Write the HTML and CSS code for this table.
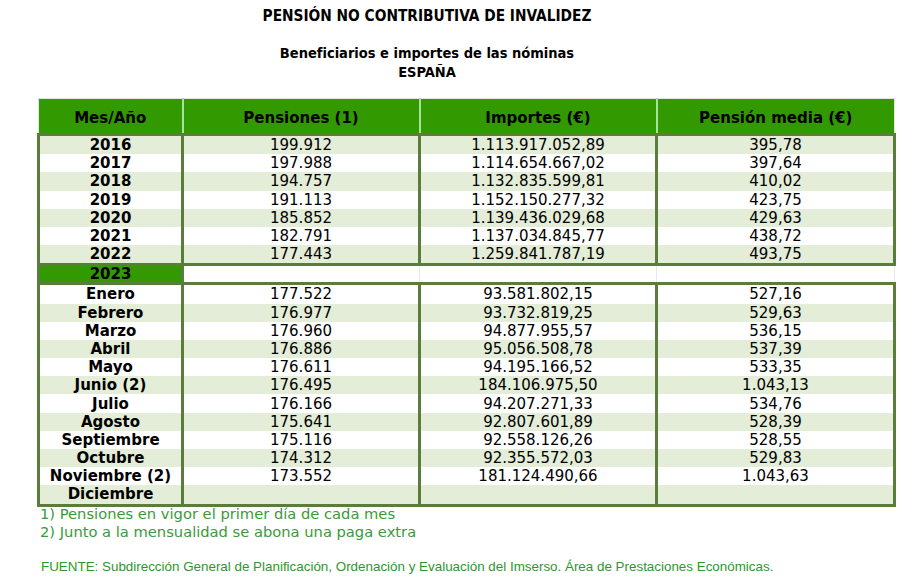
FILE: index.html
```html
<!DOCTYPE html>
<html lang="es">
<head>
<meta charset="utf-8">
<title>Pensión no contributiva de invalidez</title>
<link rel="stylesheet" href="styles.css">
</head>
<body>
<div class="page">
  <div class="titles">
    <h1 class="title">PENSIÓN NO CONTRIBUTIVA DE INVALIDEZ</h1>
    <h2 class="subtitle">Beneficiarios e importes de las nóminas<br>ESPAÑA</h2>
  </div>
  <table class="data">
    <colgroup>
      <col class="c1"><col class="c2"><col class="c3"><col class="c4">
    </colgroup>
    <thead>
      <tr><th>Mes/Año</th><th>Pensiones (1)</th><th>Importes (€)</th><th>Pensión media (€)</th></tr>
    </thead>
    <tbody class="block">
      <tr class="alt"><td class="lbl">2016</td><td>199.912</td><td>1.113.917.052,89</td><td>395,78</td></tr>
      <tr><td class="lbl">2017</td><td>197.988</td><td>1.114.654.667,02</td><td>397,64</td></tr>
      <tr class="alt"><td class="lbl">2018</td><td>194.757</td><td>1.132.835.599,81</td><td>410,02</td></tr>
      <tr><td class="lbl">2019</td><td>191.113</td><td>1.152.150.277,32</td><td>423,75</td></tr>
      <tr class="alt"><td class="lbl">2020</td><td>185.852</td><td>1.139.436.029,68</td><td>429,63</td></tr>
      <tr><td class="lbl">2021</td><td>182.791</td><td>1.137.034.845,77</td><td>438,72</td></tr>
      <tr class="alt"><td class="lbl">2022</td><td>177.443</td><td>1.259.841.787,19</td><td>493,75</td></tr>
    </tbody>
    <tbody class="sep">
      <tr><td class="lbl year">2023</td><td></td><td></td><td></td></tr>
    </tbody>
    <tbody class="block">
      <tr><td class="lbl">Enero</td><td>177.522</td><td>93.581.802,15</td><td>527,16</td></tr>
      <tr class="alt"><td class="lbl">Febrero</td><td>176.977</td><td>93.732.819,25</td><td>529,63</td></tr>
      <tr><td class="lbl">Marzo</td><td>176.960</td><td>94.877.955,57</td><td>536,15</td></tr>
      <tr class="alt"><td class="lbl">Abril</td><td>176.886</td><td>95.056.508,78</td><td>537,39</td></tr>
      <tr><td class="lbl">Mayo</td><td>176.611</td><td>94.195.166,52</td><td>533,35</td></tr>
      <tr class="alt"><td class="lbl">Junio (2)</td><td>176.495</td><td>184.106.975,50</td><td>1.043,13</td></tr>
      <tr><td class="lbl">Julio</td><td>176.166</td><td>94.207.271,33</td><td>534,76</td></tr>
      <tr class="alt"><td class="lbl">Agosto</td><td>175.641</td><td>92.807.601,89</td><td>528,39</td></tr>
      <tr><td class="lbl">Septiembre</td><td>175.116</td><td>92.558.126,26</td><td>528,55</td></tr>
      <tr class="alt"><td class="lbl">Octubre</td><td>174.312</td><td>92.355.572,03</td><td>529,83</td></tr>
      <tr><td class="lbl">Noviembre (2)</td><td>173.552</td><td>181.124.490,66</td><td>1.043,63</td></tr>
      <tr class="alt"><td class="lbl">Diciembre</td><td></td><td></td><td></td></tr>
    </tbody>
  </table>
  <div class="notes">
    <p class="note">1) Pensiones en vigor el primer día de cada mes</p>
    <p class="note">2) Junto a la mensualidad se abona una paga extra</p>
  </div>
  <p class="source">FUENTE: Subdirección General de Planificación, Ordenación y Evaluación del Imserso. Área de Prestaciones Económicas.</p>
</div>
</body>
</html>
```
FILE: styles.css
```css
html, body {
  margin: 0;
  padding: 0;
  background: #ffffff;
}

.page {
  width: 916px;
  font-family: "DejaVu Sans", Verdana, sans-serif;
  color: #000;
}

.titles {
  width: 854px;
  text-align: center;
}

.title {
  margin: 0;
  padding-top: 7px;
  font-family: "DejaVu Sans Condensed", "DejaVu Sans", sans-serif;
  font-size: 15.3px;
  font-weight: bold;
  line-height: 18px;
}

.subtitle {
  margin: 19px 0 0;
  font-family: "DejaVu Sans Condensed", "DejaVu Sans", sans-serif;
  font-size: 14.5px;
  font-weight: bold;
  line-height: 19px;
}

.data {
  margin: 16px 0 0 37px;
  border-collapse: collapse;
  table-layout: fixed;
  width: 859px;
  font-size: 15px;
}

.c1 { width: 144px; }
.c2 { width: 237px; }
.c3 { width: 237px; }
.c4 { width: 238px; }

.data th {
  background: #339900;
  height: 31px;
  padding: 3px 0 0;
  font-weight: bold;
  text-align: center;
  border-top: 1px solid #dfe6dc;
  border-left: 2px solid #a6e39e;
  border-right: 2px solid #a6e39e;
}

.data th:first-child { border-left: 1px solid #dfe6dc; }
.data th:last-child { border-right: 1px solid #dfe6dc; }

.data td {
  padding: 0;
  height: 18.2px;
  line-height: 18px;
  text-align: center;
  white-space: nowrap;
}

.block {
  border: 3px solid #5b7d3b;
}

.block td {
  border-left: 3px solid #5b7d3b;
  border-right: 3px solid #5b7d3b;
}

.block tr.alt td {
  background: #e3edd8;
}

.sep td {
  height: 16px;
  line-height: 16px;
  border-left: 1px solid #e8e8e8;
  border-right: 1px solid #e8e8e8;
  background: #fff;
}

.sep td.year {
  background: #339900;
  border-left: 3px solid #5b7d3b;
  border-right: 3px solid #5b7d3b;
}

.lbl {
  font-weight: bold;
}

.notes {
  margin: -2px 0 0 40px;
}

.note {
  margin: 0;
  font-size: 14.7px;
  line-height: 18px;
  color: #3a9a3a;
}

.source {
  margin: 18px 0 0 41px;
  font-family: "Liberation Sans", Arial, sans-serif;
  font-size: 13.4px;
  line-height: 16px;
  color: #2f962f;
}
```
